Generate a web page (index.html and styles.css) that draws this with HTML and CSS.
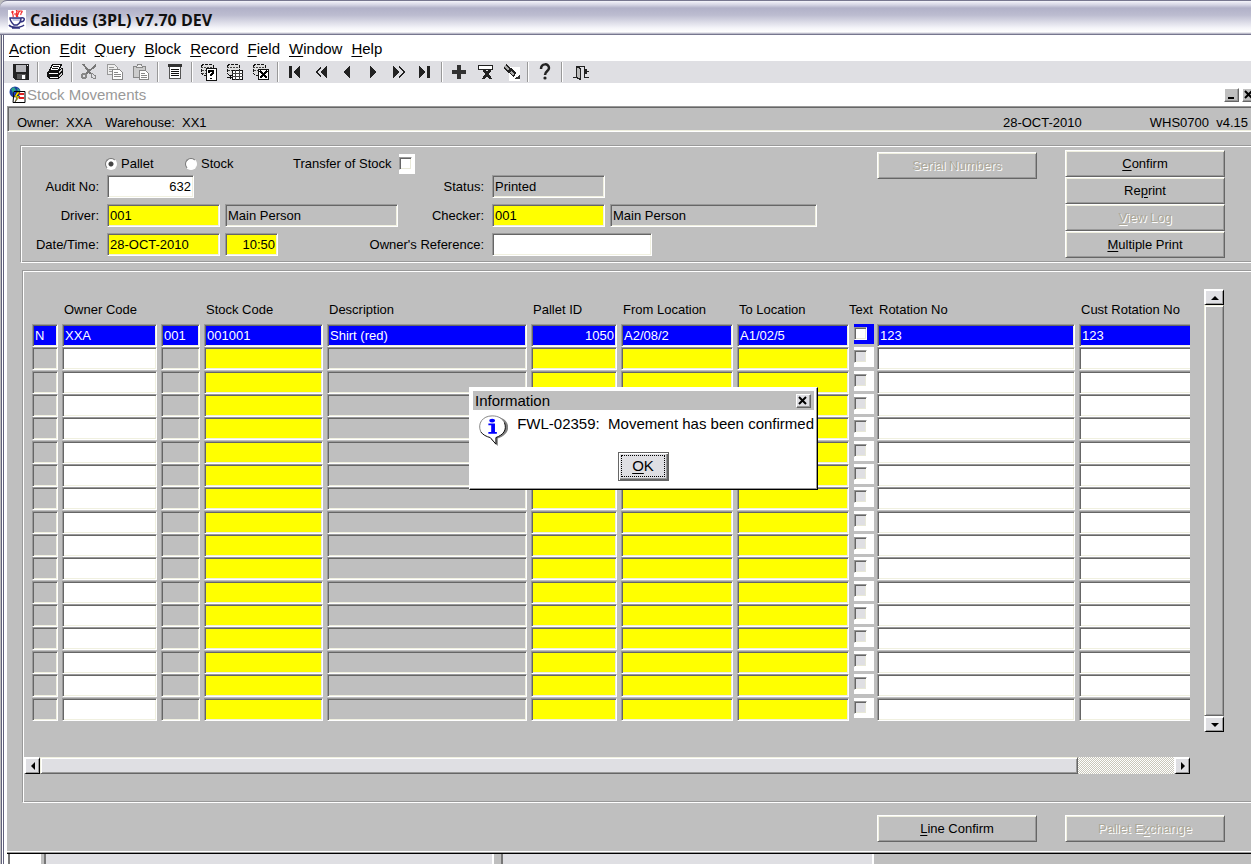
FILE: index.html
```html
<!DOCTYPE html>
<html lang="en">
  <head>
    <meta charset="UTF-8" />
    <meta name="viewport" content="width=device-width, initial-scale=1.0" />
    <title>Calidus (3PL) v7.70 DEV</title>
    <link rel="stylesheet" href="styles.css">
  </head>
  <body>
    <div class="window">
      <!-- Title bar -->
      <div class="titlebar">
        <svg class="java-icon" viewBox="0 0 18 19">
          <rect width="18" height="19" fill="#fff" />
          <path d="M5 1c-2 2 1 3 0 6M8 0c3 2-2 4 1 7M12 1c-1 1-4 3-2 6M14 1c1 1-2 2-1 4M3 2h3M9 1h5M6 4h5" fill="none" stroke="#f22a2a" stroke-width="1.2" />
          <path d="M4 8h8v3H5z" fill="#c4cae8" />
          <path d="M2 8h11c0 4-2 6-4 7H6C4 13 2 11 2 8zM13 8c5-1 4 4-1 4M1 15c2 3 12 3 15 0M4 18h8" fill="none" stroke="#31317f" stroke-width="1.5" />
        </svg>
        <h1>Calidus (3PL) v7.70 DEV</h1>
      </div>

      <div class="client">
        <!-- Menu -->
        <nav class="menu">
          <a href="#"><u>A</u>ction</a>
          <a href="#"><u>E</u>dit</a>
          <a href="#"><u>Q</u>uery</a>
          <a href="#"><u>B</u>lock</a>
          <a href="#"><u>R</u>ecord</a>
          <a href="#"><u>F</u>ield</a>
          <a href="#"><u>W</u>indow</a>
          <a href="#"><u>H</u>elp</a>
        </nav>

        <!-- Toolbar -->
        <div class="toolbar">
          <button class="tool" aria-label="Save">
            <svg viewBox="0 0 18 18"><path d="M1 1h16v16H3l-2-2z" fill="#222" /><path d="M4 2h10v7H4z" fill="#b8b8bc" /><path d="M5 11h9v5H5z" fill="#555" /><path d="M10 12h3v4h-3z" fill="#fff" /><path d="M15 2h1v1h-1z" fill="#fff" /></svg>
          </button>
          <span class="sep"></span>
          <button class="tool" aria-label="Print">
            <svg viewBox="0 0 18 18"><path d="M6.500 1.500h9l-3 6h-9z" fill="#fff" stroke="#111" /><path d="M7 3.500h6M6 5.500h6" stroke="#111" /><path d="M1 9l3-2h9l3-2h1v6l-4 5H3l-2-2z" fill="#111" /><path d="M3 10.500h9M4 14.500h8" stroke="#fff" /><path d="M13 9.500l3-3M13 13.500l3-3" stroke="#ccc" /></svg>
          </button>
          <span class="sep"></span>
          <button class="tool" aria-label="Cut" disabled>
            <svg viewBox="0 0 18 18"><path d="M3 1l8 10M16 2L6 11" fill="none" stroke="#777" stroke-width="2" /><circle cx="4" cy="13" r="2" fill="none" stroke="#888" stroke-width="2" /><path d="M11 10l5 3-1 3-4-2z" fill="none" stroke="#888" /></svg>
          </button>
          <button class="tool" aria-label="Copy" disabled>
            <svg viewBox="0 0 18 18"><path d="M1.500 1.500h7l3 3v7h-10z" fill="#eee" stroke="#999" /><path d="M3 4.500h5M3 6.500h4M3 8.500h3" stroke="#999" /><path d="M6.500 6.500h7l3 3v7h-10z" fill="#fff" stroke="#888" /><path d="M8 9.500h4M8 11.500h7M8 13.500h7" stroke="#888" /></svg>
          </button>
          <button class="tool" aria-label="Paste" disabled>
            <svg viewBox="0 0 18 18"><path d="M1.500 3.500h12v11h-12z" fill="#ccc" stroke="#888" /><path d="M4.500 4.500l1-3h4l1 3z" fill="#eee" stroke="#888" /><path d="M7.500 7.500h6l3 3v6h-9z" fill="#fff" stroke="#888" /><path d="M9 10.500h4M9 12.500h6M9 14.500h6" stroke="#888" /></svg>
          </button>
          <span class="sep"></span>
          <button class="tool" aria-label="List of values">
            <svg viewBox="0 0 18 18"><path d="M2 1h14v3H2z" fill="#333" /><path d="M3.500 4v11.500h11V4" fill="#fff" stroke="#555" /><path d="M5 6.500h8M5 8.500h8M5 10.500h8M5 12.500h8" stroke="#111" /></svg>
          </button>
          <span class="sep"></span>
          <button class="tool" aria-label="Enter query">
            <svg viewBox="0 0 18 18"><path d="M1.500 2.500l2-1h8l2 1v8l-2 2h-8l-2-2z" fill="#ddd" stroke="#111" stroke-dasharray="3 1" /><path d="M1 4.500h12M2 7.500h11M2 10.500h11" fill="none" stroke="#444" stroke-dasharray="2 1" /><path d="M6.500 5.500h10v12h-10z" fill="#fff" stroke="#111" /><path d="M9 9.500V8h4v2.500l-2 1V13M11 14.500V16" fill="none" stroke="#000" stroke-width="1.500" /></svg>
          </button>
          <button class="tool" aria-label="Execute query">
            <svg viewBox="0 0 18 18"><path d="M1.500 2.500l2-1h8l2 1v8l-2 2h-8l-2-2z" fill="#ddd" stroke="#111" stroke-dasharray="3 1" /><path d="M1 4.500h12M2 7.500h11" fill="none" stroke="#444" stroke-dasharray="2 1" /><path d="M6.500 7.500h10v9h-10z" fill="#fff" stroke="#111" /><path d="M6 10.500h11M6 13.500h11M9.500 7v10M13.500 7v10" stroke="#444" /><path d="M1 14.500h4M3.500 12.500l2 2-2 2" fill="none" stroke="#111" /></svg>
          </button>
          <button class="tool" aria-label="Cancel query">
            <svg viewBox="0 0 18 18"><path d="M1.500 2.500l2-1h8l2 1v8l-2 2h-8l-2-2z" fill="#ddd" stroke="#111" stroke-dasharray="3 1" /><path d="M1 4.500h12M2 7.500h11" fill="none" stroke="#444" stroke-dasharray="2 1" /><path d="M6.500 6.500h10v10h-10z" fill="#fff" stroke="#111" /><path d="M8 8l7 7M15 8l-7 7" stroke="#000" stroke-width="1.800" /></svg>
          </button>
          <span class="sep"></span>
          <button class="tool" aria-label="First record">
            <svg viewBox="0 0 18 18"><path d="M3 3h3v12H3zM14 3v12L7 9z" fill="#222" /></svg>
          </button>
          <button class="tool" aria-label="Previous block">
            <svg viewBox="0 0 18 18"><path d="M9 3L3 9l6 6v-2L5 9l4-4z" fill="#222" /><path d="M15 3v12L8 9z" fill="#222" /></svg>
          </button>
          <button class="tool" aria-label="Previous record">
            <svg viewBox="0 0 18 18"><path d="M12 3v12L5 9z" fill="#222" /></svg>
          </button>
          <button class="tool" aria-label="Next record">
            <svg viewBox="0 0 18 18"><path d="M6 3v12l7-6z" fill="#222" /></svg>
          </button>
          <button class="tool" aria-label="Next block">
            <svg viewBox="0 0 18 18"><path d="M9 3l6 6-6 6v-2l4-4-4-4z" fill="#222" /><path d="M3 3v12l7-6z" fill="#222" /></svg>
          </button>
          <button class="tool" aria-label="Last record">
            <svg viewBox="0 0 18 18"><path d="M11 3h3v12h-3zM3 3v12l7-6z" fill="#222" /></svg>
          </button>
          <span class="sep"></span>
          <button class="tool" aria-label="Insert record">
            <svg viewBox="0 0 18 18"><path d="M7 2h4v5h5v4h-5v5H7v-5H2V7h5z" fill="#333" /></svg>
          </button>
          <button class="tool" aria-label="Remove record">
            <svg viewBox="0 0 18 18"><path d="M2.500 2.500h14v4h-14z" fill="#fff" stroke="#222" /><path d="M7 6l8 10M15 6L7 16" stroke="#222" stroke-width="2.500" /></svg>
          </button>
          <button class="tool" aria-label="Clear record">
            <svg viewBox="0 0 18 18"><path d="M7 4h11v14H7z" fill="#fff" /><path d="M3 3l10 9" stroke="#222" stroke-width="5" /><path d="M3 3l4 4M9 9l3 3" stroke="#aaa" stroke-width="2" /><path d="M12 16l6-4v4z" fill="#333" /></svg>
          </button>
          <span class="sep"></span>
          <button class="tool" aria-label="Help">
            <svg class="smooth" viewBox="0 0 18 18"><path d="M5 6c0-6 8-6 8-1 0 3-4 3-4 7" fill="none" stroke="#222" stroke-width="2.500" /><circle cx="9" cy="15" r="1.600" fill="#222" /></svg>
          </button>
          <span class="sep"></span>
          <button class="tool tool-exit" aria-label="Exit">
            <svg viewBox="0 0 18 18"><path d="M1 14.500h3v-11h8v11h5" fill="none" stroke="#222" /><path d="M4.500 3.500l4 2v11l-4-2z" fill="#bbb" stroke="#222" /><path d="M17 8.500h-5M14 6v5" fill="none" stroke="#222" stroke-width="1.500" /></svg>
          </button>
        </div>

        <!-- Form window -->
        <div class="form-title">
          <svg class="form-icon" viewBox="0 0 17 17">
            <circle cx="6" cy="6" r="5.500" fill="#1b3fa0" /><path d="M2 3l3-2 2 3-3 3zM8 2l3 2-2 2z" fill="#2fa58a" />
            <path d="M5 5.500h11v11H4z" fill="#fff" stroke="#000" /><path d="M5 6h5v5H5z" fill="#1b3fd0" /><path d="M10 8h5M10 12h5" stroke="#e02020" stroke-width="2" /><path d="M8 6l-3 5h3l-2 5 5-6H8l3-4z" fill="#ffe600" stroke="#000" stroke-width=".5" />
          </svg>
          <h2>Stock Movements</h2>
          <button class="win-btn" aria-label="Minimise"><svg viewBox="0 0 12 10"><path d="M3 8h6" stroke="#000" stroke-width="2" /></svg></button>
          <button class="win-btn" aria-label="Close"><svg viewBox="0 0 12 10"><path d="M2 1l7 7M9 1L2 8" stroke="#000" stroke-width="2" /></svg></button>
        </div>

        <main class="form">
          <div class="info-bar">
            <span>Owner:&nbsp; XXA</span>
            <span>Warehouse:&nbsp; XX1</span>
            <span class="info-date">28-OCT-2010</span>
            <span class="info-version">WHS0700&nbsp; v4.15</span>
          </div>

          <!-- Movement header -->
          <section class="panel header-panel">
            <div class="fields">
              <div class="field-row options">
                <label><input type="radio" name="kind" checked>Pallet</label>
                <label><input type="radio" name="kind">Stock</label>
                <label class="transfer">Transfer of Stock <span class="check"><input type="checkbox"></span></label>
              </div>
              <div class="field-row first">
                <label class="name" for="audit">Audit No:</label>
                <input class="field num w-audit" id="audit" value="632">
                <label class="name-right" for="status">Status:</label>
                <div class="right-fields">
                  <input class="field locked w-code" id="status" value="Printed" readonly>
                </div>
              </div>
              <div class="field-row">
                <label class="name" for="driver">Driver:</label>
                <input class="field required w-code" id="driver" value="001">
                <input class="field locked w-driver" value="Main Person" aria-label="Driver name" readonly>
                <label class="name-right" for="checker">Checker:</label>
                <div class="right-fields">
                  <input class="field required w-code" id="checker" value="001">
                  <input class="field locked w-checker" value="Main Person" aria-label="Checker name" readonly>
                </div>
              </div>
              <div class="field-row">
                <label class="name" for="date">Date/Time:</label>
                <input class="field required w-code" id="date" value="28-OCT-2010">
                <input class="field required num w-time" value="10:50" aria-label="Time">
                <label class="name-right" for="reference">Owner's Reference:</label>
                <div class="right-fields">
                  <input class="field w-reference" id="reference">
                </div>
              </div>
            </div>
            <div class="actions">
              <button class="btn" disabled>Serial Numbers</button>
              <div class="btn-stack">
                <button class="btn"><u>C</u>onfirm</button>
                <button class="btn">Re<u>p</u>rint</button>
                <button class="btn" disabled><u>V</u>iew Log</button>
                <button class="btn"><u>M</u>ultiple Print</button>
              </div>
            </div>
          </section>

          <!-- Movement lines -->
          <section class="panel lines-panel">
            <div class="lines">
              <div class="lines-view">
                <table>
                  <colgroup>
                    <col class="c-flag"><col class="c-owner"><col class="c-wh"><col class="c-stock"><col class="c-desc">
                    <col class="c-pallet"><col class="c-from"><col class="c-to"><col class="c-text"><col class="c-rot"><col class="c-cust">
                  </colgroup>
                  <thead>
                    <tr>
                      <th></th>
                      <th>Owner Code</th>
                      <th></th>
                      <th>Stock Code</th>
                      <th>Description</th>
                      <th>Pallet ID</th>
                      <th>From Location</th>
                      <th>To Location</th>
                      <th class="text-head">Text</th>
                      <th>Rotation No</th>
                      <th>Cust Rotation No</th>
                    </tr>
                  </thead>
                  <tbody id="lines"></tbody>
                </table>
              </div>
              <div class="vscroll">
                <button class="scroll-btn" aria-label="Scroll up"><svg viewBox="0 0 8 8"><path d="M0 6h8L4 2z" /></svg></button>
                <div class="thumb"></div>
                <button class="scroll-btn" aria-label="Scroll down"><svg viewBox="0 0 8 8"><path d="M0 2h8L4 6z" /></svg></button>
              </div>
            </div>
            <div class="hscroll">
              <button class="scroll-btn" aria-label="Scroll left"><svg viewBox="0 0 8 8"><path d="M6 0v8L2 4z" /></svg></button>
              <div class="thumb"></div>
              <div class="track"></div>
              <button class="scroll-btn" aria-label="Scroll right"><svg viewBox="0 0 8 8"><path d="M2 0v8l4-4z" /></svg></button>
            </div>
          </section>

          <div class="form-footer">
            <button class="btn"><u>L</u>ine Confirm</button>
            <button class="btn" disabled>Pallet E<u>x</u>change</button>
          </div>

          <!-- Message box -->
          <div class="dialog" role="dialog" aria-labelledby="dialog-title">
            <div class="dialog-title">
              <span id="dialog-title">Information</span>
              <button class="win-btn" aria-label="Close message"><svg viewBox="0 0 12 10"><path d="M2 1l7 7M9 1L2 8" stroke="#000" stroke-width="2" /></svg></button>
            </div>
            <div class="dialog-body">
              <svg class="info-icon" viewBox="0 0 32 33">
                <path d="M19 2c8 1 13 5 13 11 0 6-5 10-11 12v8l-7-7z" fill="#808080" />
                <path d="M15 1c8 0 14 5 14 11s-4 10-10 12v7l-6-7C5 23 1 18 1 12S7 1 15 1z" fill="#fff" />
                <path d="M3 18C-1 9 5 1 15 1c7 0 11 3 13 7" fill="none" stroke="#808080" />
                <path d="M28 8c3 8-1 13-9 16v7l-6-7c-4-1-8-3-10-6" fill="none" stroke="#000" />
                <ellipse cx="15" cy="6" rx="3" ry="2" fill="#00f" />
                <path d="M11 9h7v9h2v2h-9v-2h3v-7h-3z" fill="#00f" />
              </svg>
              <p>FWL-02359:&nbsp; Movement has been confirmed</p>
            </div>
            <button class="ok-btn"><span><u>O</u>K</span></button>
          </div>
        </main>

        <!-- Status line -->
        <div class="status-strip">
          <div class="strip-lamp"></div>
          <div class="strip-message"></div>
          <div class="strip-record"></div>
          <div class="strip-rest"></div>
        </div>
      </div>
    </div>
    <script src="script.js"></script>
  </body>
</html>
```

FILE: styles.css
```css
* {
  margin: 0;
  padding: 0;
  box-sizing: border-box;
}
body {
  font-family: "Liberation Sans", Arial, sans-serif;
  font-size: 13px;
  line-height: 16px;
  color: #000;
  background-color: #bfbfbf;
}
button,
input {
  font: inherit;
  color: inherit;
}
svg {
  display: block;
}
.window {
  min-height: 100vh;
  display: flex;
  flex-direction: column;
  overflow: hidden;
}
/* Title bar */
.titlebar {
  height: 35px;
  display: flex;
  align-items: center;
  gap: 4px;
  padding: 4px 8px 0;
  border-top: 1px solid #77778f;
  border-bottom: 1px solid #77778f;
  border-top-left-radius: 7px;
  background: linear-gradient(#f4f4fa 0, #d3d3e2 4px, #b1b1c8 7px, #bcbcd0 14px, #f4f4f9 27px, #fff 31px, #a5a5b8 33px);
}
.titlebar h1 {
  font-family: "Open Sans", "Trebuchet MS", sans-serif;
  font-size: 16px;
  font-weight: 700;
  line-height: 20px;
  color: #111;
}
.java-icon {
  width: 18px;
  height: 19px;
}
.client {
  flex: 1;
  display: flex;
  flex-direction: column;
  margin-left: 1px;
  border-left: 3px double #62627c;
  background-color: #fff;
}
/* Menu */
.menu {
  display: flex;
  align-items: center;
  gap: 9px;
  height: 26px;
  padding: 2px 5px 0;
  font-size: 15px;
}
.menu a {
  color: #000;
  text-decoration: none;
}
u {
  text-underline-offset: 2px;
}
/* Toolbar */
.toolbar {
  display: flex;
  align-items: center;
  height: 22px;
  padding-left: 4px;
  background-color: #dfdfe3;
}
.tool {
  width: 26px;
  height: 22px;
  display: flex;
  align-items: center;
  justify-content: center;
  border: none;
  background: none;
}
.tool svg {
  width: 18px;
  height: 18px;
  shape-rendering: crispEdges;
}
.tool svg.smooth {
  shape-rendering: auto;
}
.tool-exit {
  width: 30px;
}
.sep {
  width: 2px;
  height: 20px;
  margin: 0 3px;
  border-left: 1px solid #999;
  border-right: 1px solid #fff;
}
/* Form title */
.form-title {
  display: flex;
  align-items: center;
  gap: 1px;
  height: 23px;
  padding-left: 5px;
  overflow: hidden;
}
.form-title h2 {
  flex: 1;
  font-size: 15px;
  font-weight: 400;
  color: #999;
}
.form-icon {
  width: 17px;
  height: 17px;
}
.win-btn {
  flex: none;
  width: 15px;
  height: 14px;
  background-color: #dfdfe3;
  border: 1px solid #fff;
  border-right-color: #666;
  border-bottom-color: #666;
  box-shadow: inset -1px -1px #999;
}
.form-title .win-btn {
  margin-right: 2px;
  background-color: #bfbfbf;
}
.form-title .win-btn:last-child {
  margin-right: -6px;
}
.win-btn svg {
  width: 12px;
  height: 10px;
}
/* Form */
.form {
  position: relative;
  margin-left: 3px;
  background-color: #bfbfbf;
  border-bottom: 1px solid #fff;
  box-shadow: 0 1px #999, 0 2px #000;
}
.info-bar {
  display: flex;
  gap: 13px;
  height: 26px;
  padding: 8px 3px 0 9px;
  border-top: 1px solid #999;
  border-left: 1px solid #999;
  border-bottom: 1px solid #fff;
  box-shadow: inset 1px 1px #666, inset 0 -1px #f0f0e0;
}
.info-date {
  margin-left: auto;
}
.info-version {
  margin-left: 55px;
}
.panel {
  border: 1px solid #999;
  border-right: none;
  border-bottom-color: #fff;
  box-shadow: inset 1px 1px #fff, inset 0 -1px #999;
}
/* Movement header */
.header-panel {
  display: flex;
  margin: 13px 0 0 13px;
  padding: 4px 26px 4px 1px;
}
.fields {
  flex: none;
  width: 795px;
  padding-top: 2px;
}
.field-row {
  display: flex;
  align-items: center;
  gap: 5px;
  height: 23px;
  margin-top: 6px;
}
.field-row.options {
  gap: 0;
  margin-top: 0;
  padding-left: 83px;
}
.field-row.first {
  margin-top: 0;
}
.options label {
  display: flex;
  align-items: center;
  width: 80px;
}
.options .transfer {
  width: auto;
  gap: 7px;
  margin-left: 28px;
}
input[type="radio"] {
  appearance: none;
  width: 12px;
  height: 12px;
  margin-right: 4px;
  border: 1px solid #fff;
  border-top-color: #777;
  border-left-color: #777;
  border-radius: 50%;
  background-color: #fff;
}
input[type="radio"]:checked {
  background: radial-gradient(#444 2px, #fff 3px);
}
.check {
  width: 16px;
  height: 20px;
  background-color: #fff;
}
input[type="checkbox"] {
  appearance: none;
  display: block;
  width: 13px;
  height: 13px;
  border: 1px solid #999;
  border-right-color: #fff;
  border-bottom-color: #fff;
  box-shadow: inset 1px 1px #666, inset -1px -1px #e8e8d8;
  background-color: #fff;
}
.check input {
  margin-top: 3px;
}
.name {
  width: 80px;
  padding-right: 3px;
  text-align: right;
}
.name-right {
  flex: 1;
  padding-right: 3px;
  text-align: right;
}
.right-fields {
  display: flex;
  gap: 5px;
  width: 325px;
}
.field {
  height: 23px;
  padding: 0 2px;
  border: 1px solid #999;
  border-right-color: #fff;
  border-bottom-color: #fff;
  border-radius: 0;
  box-shadow: inset 1px 1px #666, inset -1px -1px #f0f0e0;
  background-color: #fff;
  outline: none;
}
.num {
  text-align: right;
}
.locked {
  background-color: #bfbfbf;
}
.required {
  background-color: #ff0;
}
.w-audit {
  width: 87px;
}
.w-code {
  width: 113px;
}
.w-driver {
  width: 173px;
}
.w-checker {
  width: 207px;
}
.w-time {
  width: 53px;
}
.w-reference {
  width: 160px;
}
/* Buttons */
.btn {
  width: 160px;
  height: 27px;
  background-color: #bfbfbf;
  border: 1px solid #fff;
  border-right-color: #666;
  border-bottom-color: #666;
  box-shadow: inset 1px 1px #f0f0e0, inset -1px -1px #999;
}
.btn:disabled {
  color: #aca899;
  text-shadow: 1px 1px #fff;
}
.actions {
  display: flex;
  align-items: flex-start;
  gap: 28px;
  margin-left: auto;
}
.actions > .btn {
  margin-top: 2px;
}
.btn-stack {
  display: flex;
  flex-direction: column;
}
/* Movement lines */
.lines-panel {
  margin: 7px 0 0 15px;
  padding: 18px 0 28px 1px;
}
.lines {
  display: flex;
  gap: 14px;
  height: 443px;
  padding: 0 27px 0 8px;
}
.lines-view {
  flex: 1;
  min-width: 0;
  overflow: hidden;
}
table {
  width: 1181px;
  height: 432px;
  table-layout: fixed;
  border-collapse: collapse;
}
th {
  height: 35px;
  padding: 0 0 6px 2px;
  font-weight: 400;
  text-align: left;
  vertical-align: bottom;
  white-space: nowrap;
}
th.text-head {
  padding-left: 0;
}
td {
  padding-right: 4px;
  vertical-align: top;
}
.c-flag {
  width: 30px;
}
.c-owner {
  width: 99px;
}
.c-wh {
  width: 43px;
}
.c-stock {
  width: 123px;
}
.c-desc {
  width: 204px;
}
.c-pallet {
  width: 90px;
}
.c-from {
  width: 116px;
}
.c-to {
  width: 112px;
}
.c-text {
  width: 28px;
}
.c-rot {
  width: 202px;
}
td .field {
  display: block;
  width: 100%;
}
td.to-cell {
  padding-right: 0;
}
td.text-cell {
  padding: 0 3px 0 5px;
}
.text-box {
  height: 20px;
  padding-top: 3px;
  background-color: #fff;
}
.text-box input {
  background-color: #dfdfe3;
}
.current .field {
  color: #fff;
  background-color: #00f;
}
.current .text-box {
  background-color: #00f;
}
.current .text-box input {
  background-color: #fff;
}
/* Scroll bars */
.scroll-btn {
  flex: none;
  display: flex;
  align-items: center;
  justify-content: center;
  background-color: #dfdfe3;
  border: 2px solid #fff;
  border-right: 1px solid #000;
  border-bottom: 1px solid #000;
  box-shadow: inset -1px -1px #999;
}
.scroll-btn svg {
  width: 8px;
  height: 8px;
}
.thumb {
  border: 1px solid #f0f0e0;
  border-right-color: #666;
  border-bottom-color: #666;
  box-shadow: inset 1px 1px #fff, inset -1px -1px #999;
}
.vscroll {
  display: flex;
  flex-direction: column;
  width: 20px;
}
.vscroll .scroll-btn {
  height: 16px;
}
.vscroll .thumb {
  flex: 1;
}
.hscroll {
  display: flex;
  height: 17px;
  margin: 25px 61px 0 0;
}
.hscroll .scroll-btn {
  width: 16px;
}
.hscroll .thumb {
  flex: 1;
  background-color: #dfdfe3;
}
.hscroll .track {
  width: 96px;
  background: repeating-conic-gradient(#fff 0 25%, #c9c7ba 0 50%) 0 0 / 2px 2px;
}
.form-footer {
  display: flex;
  justify-content: flex-end;
  gap: 28px;
  padding: 12px 26px 9px;
}
/* Message box */
.dialog {
  position: absolute;
  top: 281px;
  left: 462px;
  width: 349px;
  padding: 3px;
  background-color: #fff;
  border: 1px solid #fff;
  border-right-color: #000;
  border-bottom-color: #000;
  box-shadow: inset -1px -1px #999;
  font-size: 15px;
}
.dialog-title {
  display: flex;
  align-items: center;
  justify-content: space-between;
  height: 19px;
  padding: 0 3px 0 2px;
  background-color: #bfbfbf;
}
.dialog-body {
  display: flex;
  gap: 9px;
  padding: 4px 0 0 5px;
}
.info-icon {
  width: 32px;
  height: 33px;
}
.dialog-body p {
  padding-top: 2px;
  white-space: nowrap;
}
.ok-btn {
  display: block;
  width: 51px;
  height: 29px;
  margin: 5px auto;
  padding: 1px;
  background-color: #dfdfe3;
  border: 1px solid #666;
  box-shadow: inset 1px 1px #fff, inset -1px -1px #666, inset -2px -2px #999;
}
.ok-btn span {
  display: block;
  margin: 1px 2px 2px 1px;
  line-height: 20px;
  border: 1px dotted #000;
}
/* Status line */
.status-strip {
  flex: 1;
  display: flex;
  min-height: 12px;
  padding-top: 2px;
  margin-left: 4px;
  background-color: #bfbfbf;
}
.status-strip div {
  border-left: 2px solid #777;
  border-right: 2px solid #fff;
}
.strip-lamp {
  width: 33px;
  margin-right: 3px;
  background-color: #fff;
}
.strip-message {
  width: 450px;
  background-color: #dfdfe3;
}
.strip-record {
  width: 373px;
  margin-left: 7px;
  background-color: #dfdfe3;
}
.status-strip .strip-rest {
  flex: 1;
  border: none;
}
```

FILE: script.js
```js
const columns = [
  { name: "Flag", type: "locked", cell: "" },
  { name: "Owner code", type: "", cell: "" },
  { name: "Warehouse", type: "locked", cell: "" },
  { name: "Stock code", type: "required", cell: "" },
  { name: "Description", type: "locked", cell: "" },
  { name: "Pallet ID", type: "required num", cell: "" },
  { name: "From location", type: "required", cell: "" },
  { name: "To location", type: "required", cell: "to-cell" },
  { name: "Text", type: "check", cell: "text-cell" },
  { name: "Rotation no", type: "", cell: "" },
  { name: "Cust rotation no", type: "", cell: "" },
];

const records = [
  ["N", "XXA", "001", "001001", "Shirt (red)", "1050", "A2/08/2", "A1/02/5", "", "123", "123"],
];

const VISIBLE_ROWS = 17;
const body = document.getElementById("lines");

for (let i = 0; i < VISIBLE_ROWS; i++) {
  const row = document.createElement("tr");
  if (i === 0) row.className = "current";

  columns.forEach((col, c) => {
    const td = document.createElement("td");
    td.className = col.cell;
    const input = document.createElement("input");
    input.setAttribute("aria-label", col.name + " " + (i + 1));

    if (col.type === "check") {
      input.type = "checkbox";
      const box = document.createElement("div");
      box.className = "text-box";
      box.appendChild(input);
      td.appendChild(box);
    } else {
      input.className = "field " + col.type;
      input.value = records[i] ? records[i][c] : "";
      td.appendChild(input);
    }
    row.appendChild(td);
  });
  body.appendChild(row);
}
```
